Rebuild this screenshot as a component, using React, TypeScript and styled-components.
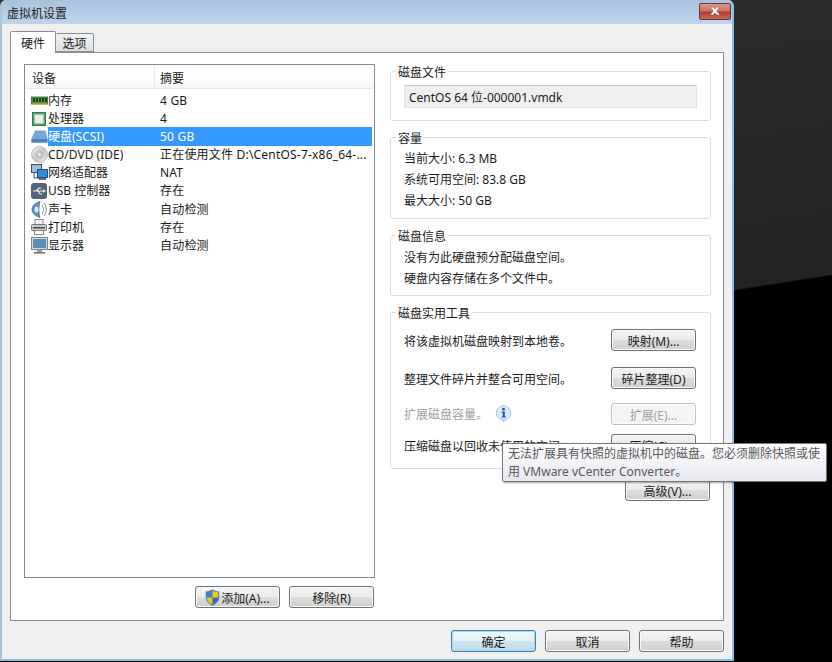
import React from "react";
import styled, { createGlobalStyle } from "styled-components";

const Global = createGlobalStyle`
  html, body { margin: 0; padding: 0; background: #000; }
  body { font: 12px "Noto Sans", "Noto Sans CJK SC", sans-serif; color: #1a1a1a; }
  * { box-sizing: border-box; }
`;

const Desktop = styled.div`
  position: relative;
  width: 832px;
  height: 662px;
  overflow: hidden;
  background: linear-gradient(171.2deg, #2e2e2e 0, #232323 398px, #000 400px);
`;
const Win = styled.div`
  width: 734px;
  height: 661px;
  display: flex;
  flex-direction: column;
  background: #f0f0f0;
  border: solid #7fc3ea;
  border-width: 0 2px 2px 2px;
  border-left-color: #a9c3dc;
  border-top-left-radius: 6px;
  border-top-right-radius: 6px;
  overflow: hidden;
`;
const TitleBar = styled.div`
  height: 24px;
  flex: none;
  margin: 0 -2px;
  padding: 1px 3px 0 7px;
  display: flex;
  align-items: center;
  justify-content: space-between;
  background: linear-gradient(180deg, #a9c2dc 0%, #b4cce4 50%, #bdd4ec 100%);
  font-size: 12px;
  color: #222;
`;
const CloseBtn = styled.div`
  width: 32px;
  height: 17px;
  margin-top: -3px;
  display: flex;
  align-items: center;
  justify-content: center;
  border: 1px solid #5a3a3a;
  border-radius: 2px;
  background: linear-gradient(180deg, #d99a90 0%, #c96f63 48%, #b03a2c 52%, #c8675a 100%);
`;
const Body = styled.div`
  flex: 1;
  min-height: 0;
  display: flex;
  flex-direction: column;
  padding: 7px 8px 8px 8px;
`;
const Tabs = styled.div`
  display: flex;
  align-items: flex-end;
  height: 21px;
  flex: none;
  position: relative;
  z-index: 1;
`;
const Tab = styled.div<{ $active?: boolean }>`
  display: flex;
  align-items: center;
  justify-content: center;
  width: ${(p) => (p.$active ? "46px" : "38px")};
  height: ${(p) => (p.$active ? "22px" : "19px")};
  margin-bottom: ${(p) => (p.$active ? "-1px" : "0")};
  border: 1px solid #898c95;
  border-bottom: ${(p) => (p.$active ? "none" : "1px solid #898c95")};
  border-left: ${(p) => (p.$active ? "1px solid #898c95" : "none")};
  background: ${(p) => (p.$active ? "#fff" : "linear-gradient(180deg, #f2f2f2 0%, #ebebeb 50%, #dcdcdc 100%)")};
  border-radius: 2px 2px 0 0;
`;
const Panel = styled.div`
  height: 569px;
  width: 714px;
  flex: none;
  background: #fff;
  border: 1px solid #898c95;
  padding: 11px 11px 12px 13px;
  display: flex;
  gap: 15px;
`;
const LeftCol = styled.div`
  width: 351px;
  display: flex;
  flex-direction: column;
  gap: 8px;
`;
const DeviceList = styled.div`
  flex: 1;
  border: 1px solid #828790;
  padding: 1px;
`;
const Header = styled.div`
  display: grid;
  grid-template-columns: 128px 1fr;
  height: 23px;
  background: linear-gradient(180deg, #fff 0%, #fff 50%, #f4f6f8 100%);
  border-bottom: 1px solid #e6e8ea;
  margin-bottom: 2px;
`;
const HeadCell = styled.div`
  display: flex;
  align-items: center;
  padding: 2px 0 0 6px;
  & + & { border-left: 1px solid #e8eaec; padding-left: 5px; }
`;
const Row = styled.div`
  display: grid;
  grid-template-columns: 128px 1fr;
  height: 18.1px;
  align-items: center;
  margin-right: 1px;
`;
const NameCell = styled.div`
  display: flex;
  align-items: center;
  height: 100%;
  padding-left: 4px;
`;
const IconSlot = styled.div`
  width: 18px;
  height: 17px;
  flex: none;
  display: flex;
  align-items: center;
  justify-content: center;
`;
const NameText = styled.span<{ $sel?: boolean }>`
  flex: 1;
  height: 100%;
  display: flex;
  align-items: center;
  padding-bottom: 1px;
  background: ${(p) => (p.$sel ? "#3399ff" : "transparent")};
  color: ${(p) => (p.$sel ? "#fff" : "inherit")};
  white-space: nowrap;
`;
const ValueCell = styled.div<{ $sel?: boolean }>`
  height: 100%;
  display: flex;
  align-items: center;
  padding-left: 6px;
  padding-bottom: 1px;
  letter-spacing: 0.2px;
  white-space: nowrap;
  background: ${(p) => (p.$sel ? "#3399ff" : "transparent")};
  color: ${(p) => (p.$sel ? "#fff" : "inherit")};
`;
const ListActions = styled.div`
  display: flex;
  justify-content: flex-end;
  gap: 9px;
  padding-right: 1px;
`;
const Btn = styled.button<{ $primary?: boolean }>`
  width: 85px;
  height: 22px;
  padding: 1px 0 0;
  display: inline-flex;
  align-items: center;
  justify-content: center;
  gap: 1px;
  font: inherit;
  color: ${(p) => (p.disabled ? "#a0a0a0" : "#1a1a1a")};
  border: 1px solid ${(p) => (p.disabled ? "#c0c0c0" : p.$primary ? "#3c7fb1" : "#707070")};
  border-radius: 3px;
  background: ${(p) =>
    p.disabled
      ? "#f4f4f4"
      : p.$primary
      ? "linear-gradient(180deg, #f0f8fc 0%, #e4f1f8 48%, #cfe5f1 52%, #bfdbea 100%)"
      : "linear-gradient(180deg, #f4f4f4 0%, #ebebeb 48%, #dddddd 52%, #cfcfcf 100%)"};
  box-shadow: inset 0 0 0 1px ${(p) => (p.$primary ? "#a8dcf0" : "#fbfbfb")};
`;
const RightCol = styled.div`
  width: 321px;
  padding-top: 7px;
  display: flex;
  flex-direction: column;
  gap: 16px;
`;
const Group = styled.div<{ $h: number }>`
  position: relative;
  height: ${(p) => p.$h}px;
  border: 1px solid #dcdcdc;
  border-radius: 3px;
  padding-left: 13px;
  padding-right: 14px;
`;
const Legend = styled.span`
  position: absolute;
  top: -9px;
  left: 5px;
  padding: 0 2px;
  background: #fff;
`;
const FileField = styled.div`
  margin-top: 13px;
  margin-right: -1px;
  height: 23px;
  padding-left: 4px;
  display: flex;
  align-items: center;
  border: 1px solid #e2e2e2;
  border-top-color: #c8c8c8;
  background: #efefef;
`;
const Lines = styled.div<{ $lh: number; $top?: number }>`
  padding-top: ${(p) => p.$top ?? 11}px;
  line-height: ${(p) => p.$lh}px;
`;
const Tools = styled.div`
  padding-top: 16px;
`;
const ToolRow = styled.div<{ $top?: number; $muted?: boolean }>`
  height: 22px;
  margin-top: ${(p) => p.$top ?? 0}px;
  display: flex;
  align-items: center;
  justify-content: space-between;
  color: ${(p) => (p.$muted ? "#a0a0a0" : "inherit")};
`;
const Note = styled.span`
  display: inline-flex;
  align-items: center;
  gap: 7px;
`;
const RowLabel = styled.span`
  padding-top: 1px;
`;
const Advanced = styled.div`
  display: flex;
  justify-content: flex-end;
  margin-top: -6px;
  padding-right: 1px;
`;
const Footer = styled.div`
  display: flex;
  justify-content: flex-end;
  gap: 9px;
  margin-top: 9px;
`;
const Tooltip = styled.div`
  position: absolute;
  left: 502px;
  top: 443px;
  width: 325px;
  height: 39px;
  padding: 1px 4px 0 5px;
  line-height: 18px;
  color: #575757;
  background: linear-gradient(180deg, #ffffff 0%, #e6e7f0 100%);
  border: 1px solid #767676;
  border-radius: 2px;
  box-shadow: 1px 1px 2px rgba(0, 0, 0, 0.35);
`;

const Ram = () => (
  <svg width="17" height="10" viewBox="0 0 17 10">
    <rect x="0" y="1" width="17" height="7" fill="#4f9a45" stroke="#2a6a2a" strokeWidth="0.8" />
    {[2, 5, 8, 11, 14].map((x) => <rect key={x} x={x} y="2" width="2" height="4" fill="#2c3a2a" />)}
    <rect x="1" y="7.5" width="15" height="1.5" fill="#d4b94e" />
  </svg>
);
const Cpu = () => (
  <svg width="14" height="14" viewBox="0 0 14 14">
    <rect x="0.5" y="0.5" width="13" height="13" fill="#5ba377" stroke="#2f7a4e" />
    <rect x="2.5" y="2.5" width="9" height="9" fill="#eaefe6" stroke="#a9b8a6" strokeWidth="0.6" />
  </svg>
);
const Disk = () => (
  <svg width="17" height="13" viewBox="0 0 17 13">
    <path d="M4 0.5 H14.5 L16.5 8.5 V12.5 H0.5 V8.5 Z" fill="#7aa8de" />
    <path d="M0.5 9 H16.5 V12.5 H0.5 Z" fill="#4a80c2" />
  </svg>
);
const Cd = () => (
  <svg width="17" height="17" viewBox="0 0 17 17">
    <defs>
      <linearGradient id="cdg" x1="0" y1="0" x2="1" y2="1">
        <stop offset="0" stopColor="#f6f6f6" /><stop offset="0.5" stopColor="#c6c6c6" /><stop offset="1" stopColor="#ededed" />
      </linearGradient>
    </defs>
    <circle cx="8.5" cy="8.5" r="8" fill="url(#cdg)" stroke="#ababab" strokeWidth="0.7" />
    <circle cx="8.5" cy="8.5" r="3.4" fill="none" stroke="#b0b0b0" strokeWidth="0.7" />
    <circle cx="8.5" cy="8.5" r="1.6" fill="#fff" stroke="#a5a5a5" strokeWidth="0.6" />
  </svg>
);
const Net = () => (
  <svg width="17" height="17" viewBox="0 0 17 17">
    <rect x="0.5" y="0.5" width="10" height="8" fill="#9cc0e0" stroke="#35536e" />
    <path d="M3 9 V14 H8" fill="none" stroke="#35536e" />
    <rect x="6.5" y="5.5" width="10" height="8" fill="#2f8ce0" stroke="#2c4a68" />
    <rect x="8" y="14" width="7" height="2" fill="#5b6e80" />
  </svg>
);
const Usb = () => (
  <svg width="16" height="16" viewBox="0 0 16 16">
    <rect x="0" y="0" width="16" height="16" rx="3" fill="#536678" />
    <path d="M2 8 H13 M5 8 L8 5 H10 M7 8 L9 11 H11" fill="none" stroke="#eef3f7" strokeWidth="1.1" />
    <path d="M15 8 L12 6.2 V9.8 Z" fill="#eef3f7" />
  </svg>
);
const Sound = () => (
  <svg width="16" height="17" viewBox="0 0 16 17">
    <path d="M9 0.5 C4 2 1 5 1 8.5 C1 12 4 15 9 16.5 C7.5 12 7.5 5 9 0.5Z" fill="#5b8fce" stroke="#39608f" strokeWidth="0.7" />
    <ellipse cx="5.5" cy="8.5" rx="2" ry="3" fill="#e3edf8" />
    <path d="M11 4 C13 7 13 10 11 13 M13 2 C16 6 16 11 13 15" fill="none" stroke="#8a8f96" strokeWidth="1" />
  </svg>
);
const Printer = () => (
  <svg width="16" height="16" viewBox="0 0 16 16">
    <rect x="4" y="0.5" width="8" height="5" fill="#f7f7f7" stroke="#8a8a8a" />
    <rect x="0.5" y="5.5" width="15" height="6" rx="1" fill="#c4c8cc" stroke="#74787d" />
    <rect x="2" y="8" width="12" height="1.5" fill="#4a4e53" />
    <rect x="3.5" y="11.5" width="9" height="4" fill="#f7f7f7" stroke="#8a8a8a" />
  </svg>
);
const Monitor = () => (
  <svg width="17" height="17" viewBox="0 0 17 17">
    <rect x="0.5" y="0.5" width="16" height="12" fill="#d0d8de" stroke="#7a8690" />
    <rect x="2" y="2" width="13" height="9" fill="#5d8fb4" />
    <rect x="6" y="13" width="5" height="2" fill="#9aa3ab" />
    <rect x="3" y="15" width="11" height="1.6" fill="#6c757e" />
  </svg>
);
const Shield = () => (
  <svg width="15" height="17" viewBox="0 0 15 17">
    <path d="M7.5 0.5 C5.5 2 3 2.5 1 2.5 V8.5 C1 12 4 15 7.5 16.5 C11 15 14 12 14 8.5 V2.5 C12 2.5 9.5 2 7.5 0.5Z" fill="#2f6fc0" stroke="#8a98a8" strokeWidth="0.8" />
    <path d="M7.5 1.5 V8.5 H1.8 V3.2 C4 3.2 6 2.6 7.5 1.5Z" fill="#3f7fd0" />
    <path d="M7.5 1.5 C9 2.6 11 3.2 13.2 3.2 V8.5 H7.5Z" fill="#f2c81e" />
    <path d="M1.8 8.5 H7.5 V15.6 C4.5 14.4 1.8 11.6 1.8 8.5Z" fill="#f2c81e" />
  </svg>
);
const Info = () => (
  <svg width="17" height="18" viewBox="0 0 17 18">
    <circle cx="8.5" cy="8" r="7.2" fill="#dfeafa" stroke="#a4c2e6" />
    <path d="M6 14 L8 17.5 L11 14Z" fill="#b9d0ec" />
    <circle cx="8.5" cy="4.2" r="1.4" fill="#1f55a8" />
    <path d="M6.7 6.6 H9.8 V11.4 H11 V12.6 H6.5 V11.4 H7.7 V7.8 H6.7Z" fill="#1f55a8" />
  </svg>
);
const CloseX = () => (
  <svg width="12" height="10" viewBox="0 0 12 10">
    <path d="M1 1 H4 L6 3 L8 1 H11 L7.7 5 L11 9 H8 L6 7 L4 9 H1 L4.3 5Z" fill="#fff" stroke="#7a4a45" strokeWidth="0.5" />
  </svg>
);

const devices = [
  { icon: <Ram />, name: "内存", value: "4 GB" },
  { icon: <Cpu />, name: "处理器", value: "4" },
  { icon: <Disk />, name: "硬盘(SCSI)", value: "50 GB", selected: true },
  { icon: <Cd />, name: "CD/DVD (IDE)", value: "正在使用文件 D:\\CentOS-7-x86_64-..." },
  { icon: <Net />, name: "网络适配器", value: "NAT" },
  { icon: <Usb />, name: "USB 控制器", value: "存在" },
  { icon: <Sound />, name: "声卡", value: "自动检测" },
  { icon: <Printer />, name: "打印机", value: "存在" },
  { icon: <Monitor />, name: "显示器", value: "自动检测" },
];

export default function App() {
  return (
    <Desktop>
      <Global />
      <Win>
        <TitleBar>
          <span>虚拟机设置</span>
          <CloseBtn><CloseX /></CloseBtn>
        </TitleBar>
        <Body>
          <Tabs>
            <Tab $active>硬件</Tab>
            <Tab>选项</Tab>
          </Tabs>
          <Panel>
            <LeftCol>
              <DeviceList>
                <Header>
                  <HeadCell>设备</HeadCell>
                  <HeadCell>摘要</HeadCell>
                </Header>
                {devices.map((d) => (
                  <Row key={d.name}>
                    <NameCell>
                      <IconSlot>{d.icon}</IconSlot>
                      <NameText $sel={d.selected}>{d.name}</NameText>
                    </NameCell>
                    <ValueCell $sel={d.selected}>{d.value}</ValueCell>
                  </Row>
                ))}
              </DeviceList>
              <ListActions>
                <Btn><Shield />添加(A)...</Btn>
                <Btn>移除(R)</Btn>
              </ListActions>
            </LeftCol>
            <RightCol>
              <Group $h={50}>
                <Legend>磁盘文件</Legend>
                <FileField>CentOS 64 位-000001.vmdk</FileField>
              </Group>
              <Group $h={82}>
                <Legend>容量</Legend>
                <Lines $lh={20.8}>
                  <div>当前大小: 6.3 MB</div>
                  <div>系统可用空间: 83.8 GB</div>
                  <div>最大大小: 50 GB</div>
                </Lines>
              </Group>
              <Group $h={61}>
                <Legend>磁盘信息</Legend>
                <Lines $lh={21}>
                  <div>没有为此硬盘预分配磁盘空间。</div>
                  <div>硬盘内容存储在多个文件中。</div>
                </Lines>
              </Group>
              <Group $h={157}>
                <Legend>磁盘实用工具</Legend>
                <Tools>
                  <ToolRow>
                    <RowLabel>将该虚拟机磁盘映射到本地卷。</RowLabel>
                    <Btn>映射(M)...</Btn>
                  </ToolRow>
                  <ToolRow $top={16}>
                    <RowLabel>整理文件碎片并整合可用空间。</RowLabel>
                    <Btn>碎片整理(D)</Btn>
                  </ToolRow>
                  <ToolRow $top={14} $muted>
                    <Note>扩展磁盘容量。<Info /></Note>
                    <Btn disabled>扩展(E)...</Btn>
                  </ToolRow>
                  <ToolRow $top={9}>
                    <RowLabel>压缩磁盘以回收未使用的空间。</RowLabel>
                    <Btn>压缩(C)...</Btn>
                  </ToolRow>
                </Tools>
              </Group>
              <Advanced><Btn>高级(V)...</Btn></Advanced>
            </RightCol>
          </Panel>
          <Footer>
            <Btn $primary>确定</Btn>
            <Btn>取消</Btn>
            <Btn>帮助</Btn>
          </Footer>
        </Body>
      </Win>
      <Tooltip>无法扩展具有快照的虚拟机中的磁盘。您必须删除快照或使用 VMware vCenter Converter。</Tooltip>
    </Desktop>
  );
}
